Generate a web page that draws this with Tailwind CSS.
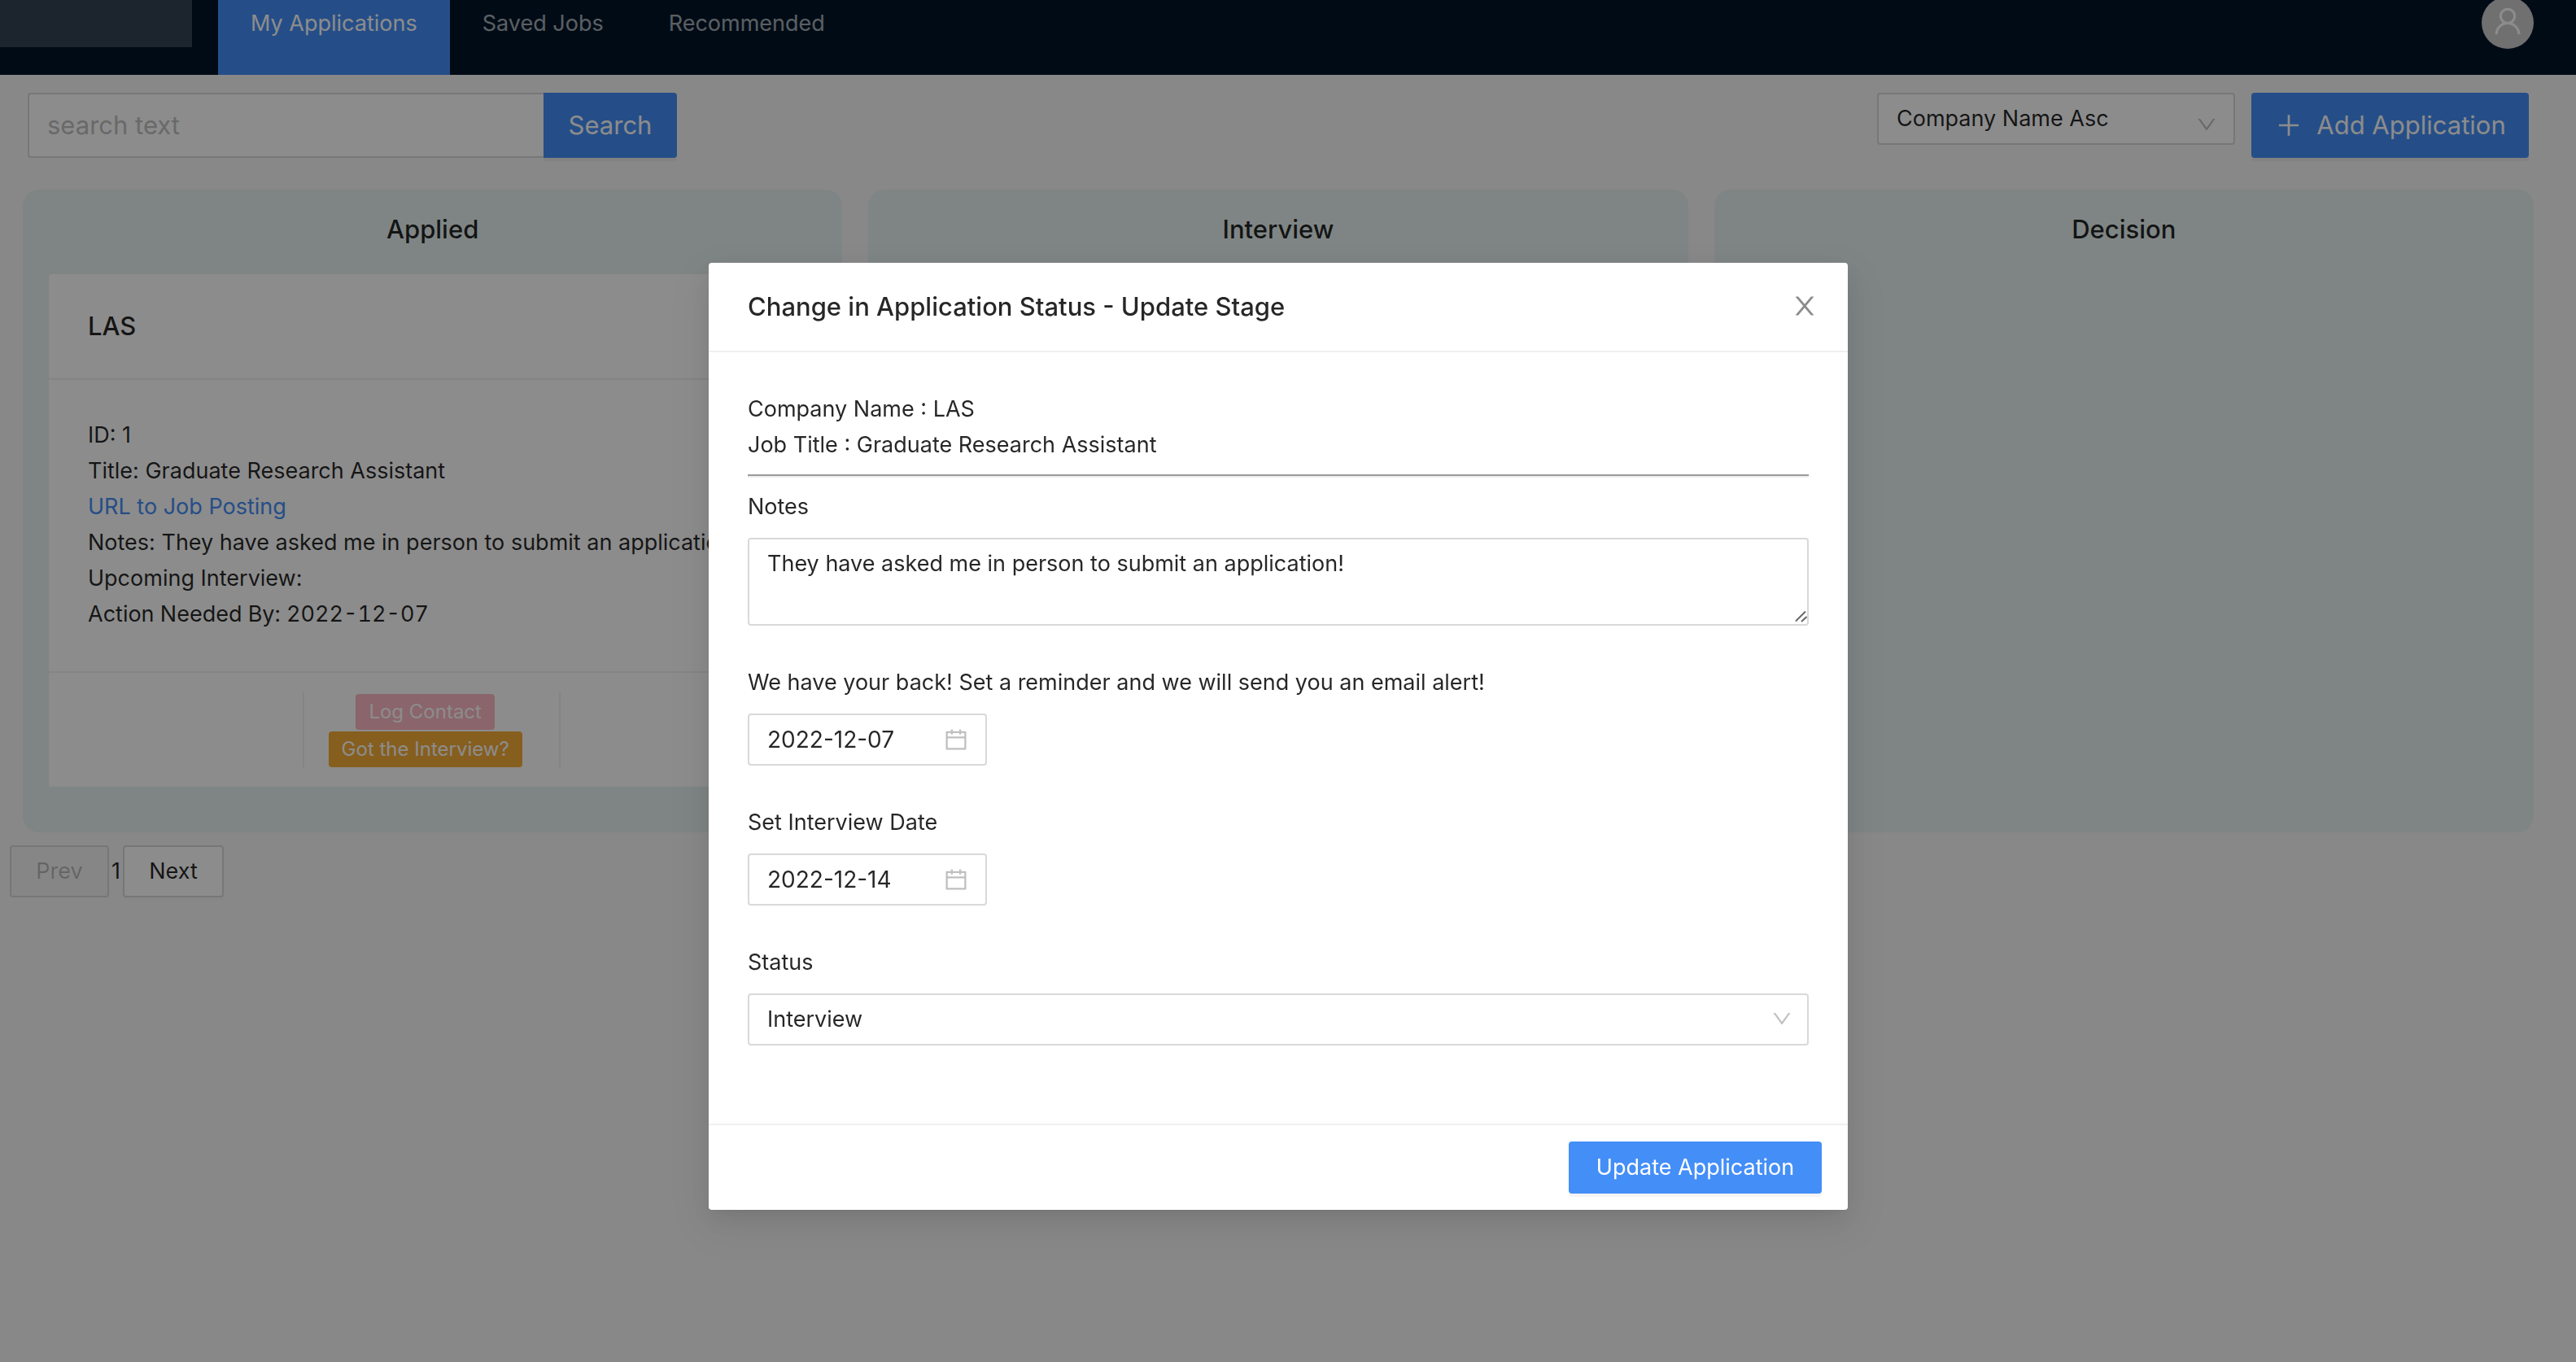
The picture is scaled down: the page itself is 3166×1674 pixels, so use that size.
<!DOCTYPE html>
<html lang="en">
<head>
<meta charset="utf-8">
<title>My Applications</title>
<script src="https://cdn.jsdelivr.net/npm/@tailwindcss/browser@4"></script>
</head>
<body class="min-h-screen overflow-hidden bg-[#f8f8f8] font-['Inter',sans-serif] text-[27px] leading-[44px] text-black/85">

<svg class="hidden" aria-hidden="true">
  <symbol id="down" viewBox="0 0 1024 1024"><path d="M884 256h-75c-5.1 0-9.9 2.5-12.9 6.6L512 654.2 227.9 262.6c-3-4.1-7.8-6.6-12.9-6.6h-75c-6.5 0-10.3 7.4-6.5 12.7l352.6 486.1c12.8 17.6 39 17.6 51.7 0l352.6-486.1c3.9-5.3.1-12.7-6.4-12.7z"/></symbol>
  <symbol id="close" viewBox="0 0 1024 1024"><path d="M563.8 512l262.5-312.9c4.4-5.2.7-13.1-6.1-13.1h-79.8c-4.7 0-9.2 2.1-12.3 5.7L511.6 449.8 295.1 191.7c-3-3.6-7.5-5.7-12.3-5.7H203c-6.8 0-10.5 7.9-6.1 13.1L459.4 512 196.9 824.9A7.95 7.95 0 00203 838h79.8c4.7 0 9.2-2.1 12.3-5.7l216.5-258.1 216.5 258.1c3 3.6 7.5 5.7 12.3 5.7h79.8c6.8 0 10.5-7.9 6.1-13.1L563.8 512z"/></symbol>
  <symbol id="plus" viewBox="0 0 1024 1024"><path d="M482 152h60q8 0 8 8v704q0 8-8 8h-60q-8 0-8-8V160q0-8 8-8z"/><path d="M176 474h672q8 0 8 8v60q0 8-8 8H176q-8 0-8-8v-60q0-8 8-8z"/></symbol>
  <symbol id="calendar" viewBox="0 0 1024 1024"><path d="M880 184H712v-64c0-4.4-3.6-8-8-8h-56c-4.4 0-8 3.6-8 8v64H384v-64c0-4.4-3.6-8-8-8h-56c-4.4 0-8 3.6-8 8v64H144c-17.7 0-32 14.3-32 32v664c0 17.7 14.3 32 32 32h736c17.7 0 32-14.3 32-32V216c0-17.7-14.3-32-32-32zm-40 656H184V460h656v380zM184 392V256h128v48c0 4.4 3.6 8 8 8h56c4.4 0 8-3.6 8-8v-48h256v48c0 4.4 3.6 8 8 8h56c4.4 0 8-3.6 8-8v-48h128v136H184z"/></symbol>
  <symbol id="user" viewBox="0 0 1024 1024"><path d="M858.5 763.6a374 374 0 00-80.6-119.5 375.63 375.63 0 00-119.5-80.6c-.4-.2-.8-.3-1.2-.5C719.5 518 760 444.7 760 362c0-137-111-248-248-248S264 225 264 362c0 82.7 40.5 156 102.8 201.1-.4.2-.8.3-1.2.5-44.8 18.9-85 46-119.5 80.6a375.63 375.63 0 00-80.6 119.5A371.7 371.7 0 00136 901.8a8 8 0 008 8.2h60c4.4 0 7.9-3.5 8-7.8 2-77.2 33-149.5 87.8-204.3 56.7-56.7 132-87.9 212.2-87.9s155.5 31.2 212.2 87.9C779 752.7 810 825 812 902.2c.1 4.4 3.6 7.8 8 7.8h60a8 8 0 008-8.2c-1-47.8-10.9-94.3-29.5-138.2zM512 534c-45.9 0-89.1-17.9-121.6-50.4S340 407.9 340 362c0-45.9 17.9-89.1 50.4-121.6S466.1 190 512 190s89.1 17.9 121.6 50.4S684 316.1 684 362c0 45.9-17.9 89.1-50.4 121.6S557.9 534 512 534z"/></symbol>
</svg>

<header class="flex h-[92px] items-start bg-[#001529] pr-[52px]">
  <div class="mr-8 h-[58px] w-[236px] bg-white/20"></div>
  <nav class="flex h-full grow text-white/65">
    <a href="#" class="bg-[#448ef7] px-10 pt-[7px] text-white">My Applications</a>
    <a href="#" class="px-10 pt-[7px]">Saved Jobs</a>
    <a href="#" class="px-10 pt-[7px]">Recommended</a>
  </nav>
  <button type="button" aria-label="Account" class="-mt-1 flex size-16 items-center justify-center rounded-full bg-[#ccc] pb-1 text-white">
    <svg class="size-[42px] fill-current"><use href="#user"/></svg>
  </button>
</header>

<main>
  <div class="flex items-start justify-between pt-[22px] pr-[58px] pl-[34px]">
    <form class="flex h-20 text-[31px]">
      <input type="text" aria-label="Search text" placeholder="search text" class="w-[634px] rounded-l border-2 border-r-0 border-[#d9d9d9] bg-white px-[22px] placeholder:text-[#bfbfbf]">
      <button type="button" class="w-[164px] rounded-r bg-[#448ef7] text-white shadow-[0_4px_0_rgba(0,0,0,0.045)]">Search</button>
    </form>
    <div class="flex items-start gap-5">
      <div class="relative">
        <select aria-label="Sort by" class="h-16 w-[440px] appearance-none rounded border-2 border-[#d9d9d9] bg-white px-[22px]">
          <option>Company Name Asc</option>
        </select>
        <svg class="pointer-events-none absolute top-[25px] right-[21px] size-7 fill-[#bfbfbf]"><use href="#down"/></svg>
      </div>
      <button type="button" class="flex h-20 w-[341px] items-center justify-center gap-4 rounded bg-[#448ef7] text-[31px] text-white shadow-[0_4px_0_rgba(0,0,0,0.045)]">
        <svg class="size-9 fill-current"><use href="#plus"/></svg>Add Application
      </button>
    </div>
  </div>

  <div class="grid grid-cols-3 gap-8 pt-[39px] pr-[52px] pl-7">
    <section class="rounded-[20px] bg-[#e7f2f0] px-8 pt-[27px] pb-14">
      <h2 class="mb-[33px] text-center text-[31px] font-medium">Applied</h2>
      <article class="rounded-t-sm bg-white">
        <h3 class="border-b-2 border-[#f0f0f0] px-12 py-[42px] text-[31px] font-medium">LAS</h3>
        <div class="px-12 pt-[46px] pb-12 whitespace-nowrap">
          <p>ID: 1</p>
          <p>Title: Graduate Research Assistant</p>
          <p><a href="#" class="text-[#448ef7]">URL to Job Posting</a></p>
          <p>Notes: They have asked me in person to submit an application!</p>
          <p>Upcoming Interview:</p>
          <p class="tabular-nums">Action Needed By: 2022-12-07</p>
        </div>
        <div class="grid grid-cols-3 border-t-2 border-[#f0f0f0] py-6">
          <div class="border-r-2 border-[#f0f0f0]"></div>
          <div class="flex flex-col items-center gap-0.5 border-r-2 border-[#f0f0f0] pt-0.5 pr-4 text-[24px]">
            <button type="button" class="h-11 rounded bg-[#fcb9c4] px-4 text-white">Log Contact</button>
            <button type="button" class="h-11 rounded bg-[#f5ac38] px-4 text-white">Got the Interview?</button>
          </div>
          <div></div>
        </div>
      </article>
    </section>
    <section class="rounded-[20px] bg-[#e7f2f0] px-8 pt-[27px] pb-14">
      <h2 class="text-center text-[31px] font-medium">Interview</h2>
    </section>
    <section class="rounded-[20px] bg-[#e7f2f0] px-8 pt-[27px] pb-14">
      <h2 class="text-center text-[31px] font-medium">Decision</h2>
    </section>
  </div>

  <div class="flex items-center pt-4 pl-3">
    <button type="button" disabled class="h-16 w-[122px] rounded border-2 border-[#d9d9d9] bg-[#f5f5f5] text-black/25">Prev</button>
    <span class="w-[17px] text-center">1</span>
    <button type="button" class="h-16 w-[124px] rounded border-2 border-[#d9d9d9] bg-white shadow-[0_4px_0_rgba(0,0,0,0.015)]">Next</button>
  </div>
</main>

<div class="fixed inset-0 flex items-start justify-center bg-black/45 pt-[323px] pr-6">
  <div role="dialog" aria-labelledby="dialog-title" class="w-[1400px] rounded bg-white shadow-[0_6px_12px_-8px_rgba(0,0,0,0.12),0_12px_32px_0_rgba(0,0,0,0.08),0_18px_56px_16px_rgba(0,0,0,0.05)]">
    <div class="flex items-center justify-between border-b-2 border-[#f0f0f0] py-8 pr-[35px] pl-12">
      <h1 id="dialog-title" class="text-[31px] font-medium">Change in Application Status - Update Stage</h1>
      <button type="button" aria-label="Close" class="pb-0.5 text-black/45"><svg class="size-9 fill-current"><use href="#close"/></svg></button>
    </div>
    <form id="stage" class="px-12 pt-12 pb-24">
      <p>Company Name : LAS</p>
      <p>Job Title : Graduate Research Assistant</p>
      <hr class="my-3.5 border-t-2 border-b-2 border-t-[#9a9a9a] border-b-[#ededed]">
      <div class="flex flex-col items-start gap-12">
        <div class="flex w-full flex-col gap-4">
          <label for="notes">Notes</label>
          <div class="relative">
            <textarea id="notes" class="block h-[108px] w-full resize-none rounded border-2 border-[#d9d9d9] px-[22px] py-2">They have asked me in person to submit an application!</textarea>
            <svg viewBox="0 0 16 16" class="pointer-events-none absolute right-0.5 bottom-0.5 size-4 fill-none stroke-[#666] stroke-2"><path d="M2 12.5L14 .5M9 13l6.500-6"/></svg>
          </div>
        </div>
        <div class="flex flex-col gap-4">
          <label for="reminder">We have your back! Set a reminder and we will send you an email alert!</label>
          <div class="flex h-16 w-[294px] items-center rounded border-2 border-[#d9d9d9] pr-5 pl-[22px]">
            <input id="reminder" type="text" value="2022-12-07" class="min-w-0 grow text-[28px]">
            <svg class="size-8 shrink-0 fill-[#bfbfbf]"><use href="#calendar"/></svg>
          </div>
        </div>
        <div class="flex flex-col gap-4">
          <label for="interview">Set Interview Date</label>
          <div class="flex h-16 w-[294px] items-center rounded border-2 border-[#d9d9d9] pr-5 pl-[22px]">
            <input id="interview" type="text" value="2022-12-14" class="min-w-0 grow text-[28px]">
            <svg class="size-8 shrink-0 fill-[#bfbfbf]"><use href="#calendar"/></svg>
          </div>
        </div>
        <div class="flex w-full flex-col gap-4">
          <label for="status">Status</label>
          <div class="relative">
            <select id="status" class="block h-16 w-full appearance-none rounded border-2 border-[#d9d9d9] px-[22px]">
              <option>Interview</option>
            </select>
            <svg class="pointer-events-none absolute top-[17px] right-[19px] size-7 fill-[#bfbfbf]"><use href="#down"/></svg>
          </div>
        </div>
      </div>
    </form>
    <div class="flex justify-end border-t-2 border-[#f0f0f0] px-8 py-5">
      <button type="submit" form="stage" class="h-16 w-[311px] rounded bg-[#448ef7] text-white shadow-[0_4px_0_rgba(0,0,0,0.045)]">Update Application</button>
    </div>
  </div>
</div>
</body>
</html>
